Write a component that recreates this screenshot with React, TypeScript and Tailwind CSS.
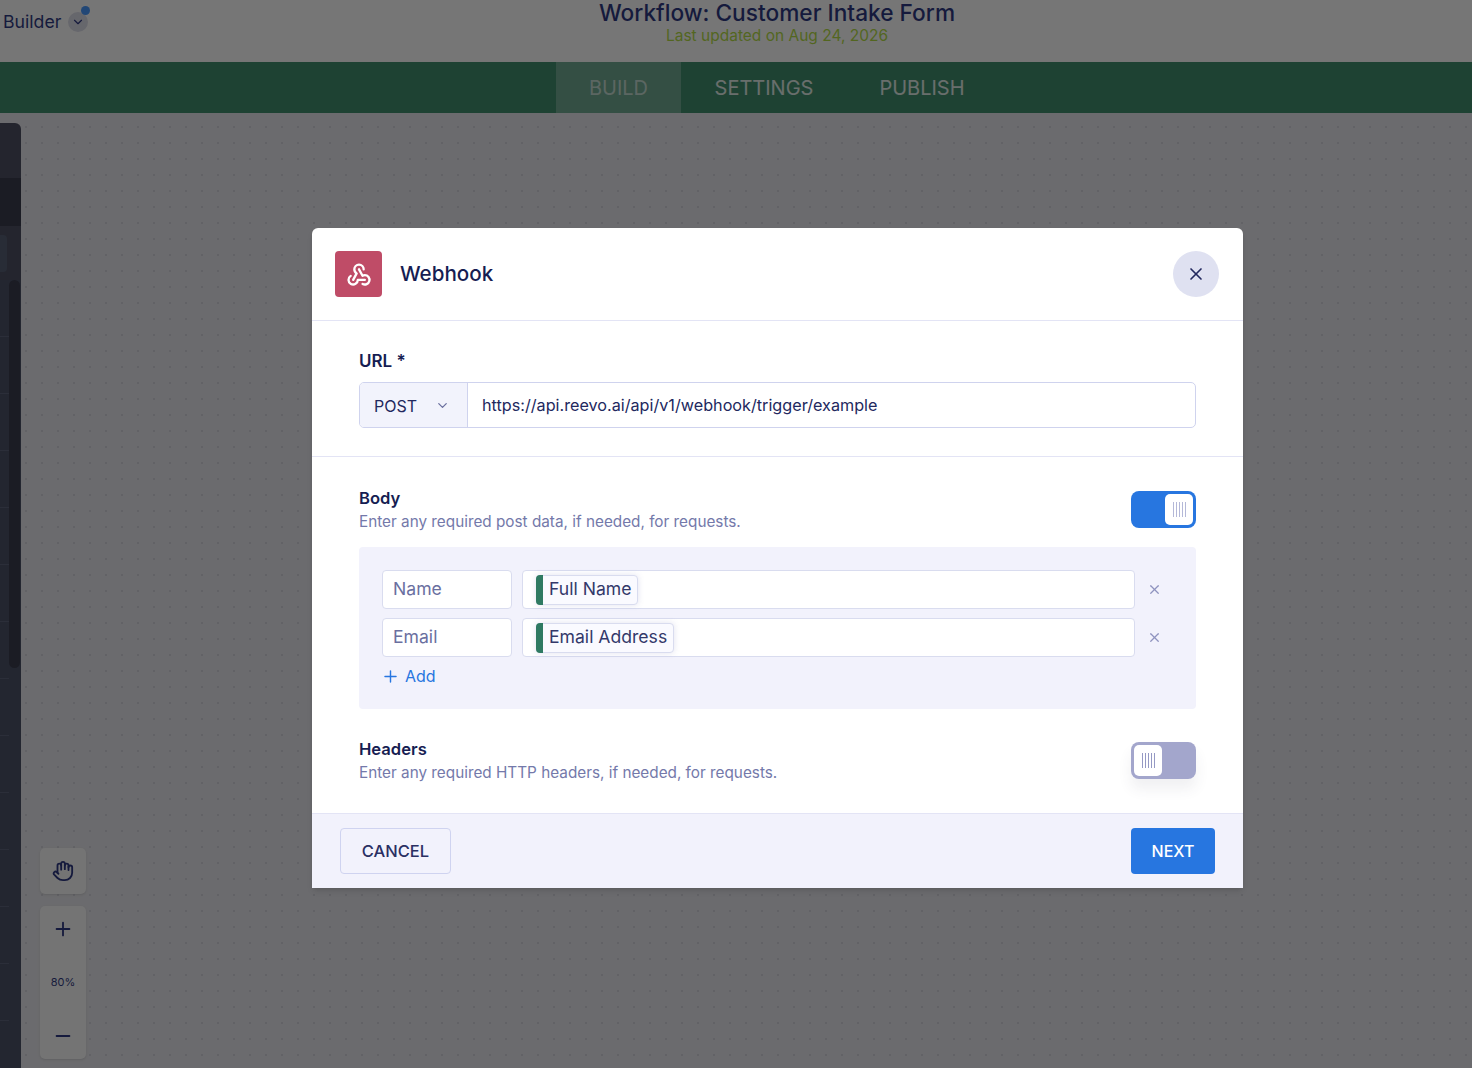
import { ChevronDown, Hand, Minus, Plus, X } from 'lucide-react'
import { TbWebhook } from 'react-icons/tb'

const font = { fontFamily: 'Inter, "Noto Sans", sans-serif' }

const sidebarRows = Array.from({ length: 14 }, (_, i) => i)

// Row of the body table: key input + value chip + remove button
const BodyRow = ({ name, value }: { name: string; value: string }) => (
  <div className="flex items-center">
    <div className="flex h-[39px] w-[130px] items-center rounded-[4px] border border-[#d9dcef] bg-white pl-[10px] text-[17.6px] text-[#6a6f9f]">
      {name}
    </div>
    <div className="ml-[10px] flex h-[39px] w-[613px] items-center rounded-[4px] border border-[#d9dcef] bg-white pl-[13px]">
      <div className="flex h-[30px] items-center rounded-[4px] border border-[#d9dcef] bg-[#fafaff] pr-[6px] shadow-[0_0_6px_rgba(90,95,170,0.18)]">
        <span className="-my-px -ml-px h-[30px] w-[7px] rounded-l-[4px] bg-[#2f7a62]" />
        <span className="ml-[6px] text-[17.6px] text-[#33386a]">{value}</span>
      </div>
    </div>
    <X className="ml-[12px] h-[15px] w-[15px] text-[#8f93bf]" strokeWidth={2} />
  </div>
)

const Grip = ({ color }: { color: string }) => (
  <div className="flex gap-[2px]">
    {[0, 1, 2, 3, 4].map((i) => (
      <span key={i} className={`h-[15px] w-px ${color}`} />
    ))}
  </div>
)

const Section = ({ title, text, on }: { title: string; text: string; on: boolean }) => (
  <div className="flex items-center justify-between">
    <div>
      <div className="text-[16.6px] leading-[22px] font-semibold text-[#161d52]">{title}</div>
      <div className="mt-[2px] text-[15.3px] leading-[22px] text-[#7479aa]">{text}</div>
    </div>
    {on ? (
      <div className="-mt-[2px] flex h-[37px] w-[65px] items-center justify-end rounded-[8px] bg-[#2776e0] pr-[3px]">
        <div className="flex h-[31px] w-[28px] items-center justify-center rounded-[5px] bg-white">
          <Grip color="bg-[#b4b8d8]" />
        </div>
      </div>
    ) : (
      <div className="-mt-[2px] flex h-[37px] w-[65px] items-center rounded-[8px] bg-[#a3a6cc] pl-[3px] shadow-[0_10px_14px_rgba(60,60,90,0.08)]">
        <div className="flex h-[31px] w-[28px] items-center justify-center rounded-[5px] bg-white">
          <Grip color="bg-[#9599c4]" />
        </div>
      </div>
    )}
  </div>
)

export default function App() {
  return (
    <div className="relative h-[1068px] w-[1472px] overflow-hidden bg-white" style={font}>
      {/* Header */}
      <header className="relative flex h-[62px] items-start justify-center bg-white pl-[82px]">
        <div className="absolute top-[10px] left-[3px] flex items-center text-[17.7px] leading-[24px] text-[#0e1a70]">
          Builder
          <span className="relative ml-[7px] flex h-[20px] w-[20px] items-center justify-center rounded-full bg-[#d8d9e6]">
            <ChevronDown className="h-[14px] w-[14px] text-[#0e1a70]" />
            <span className="absolute -top-[6px] -right-[2px] h-[9px] w-[9px] rounded-full bg-[#2f8bff]" />
          </span>
        </div>
        <div className="text-center">
          <div className="text-[22.7px] leading-[26px] font-medium text-[#0e1a70]">Workflow: Customer Intake Form</div>
          <div className="mt-[1px] text-[15.5px] leading-[18px] text-[#a8d82a]">Last updated on Aug 24, 2026</div>
        </div>
      </header>

      {/* Tabs */}
      <nav className="flex h-[51px] justify-center bg-[#247e58] pl-[81px] text-[20px] text-white">
        <div className="flex w-[125px] items-center justify-center bg-white/25 text-white/60">BUILD</div>
        <div className="flex w-[166px] items-center justify-center text-white/85">SETTINGS</div>
        <div className="flex w-[150px] items-center justify-center text-white/85">PUBLISH</div>
      </nav>

      {/* Canvas */}
      <main className="relative h-[955px] bg-[#e4e4ea] bg-[radial-gradient(#cdcdd6_0.8px,transparent_1.1px)] bg-[size:16px_16px] bg-[position:2px_6px]">
        <aside className="absolute top-[10px] bottom-0 left-0 flex w-[21px] flex-col overflow-hidden rounded-tr-[6px] bg-[#33354c]">
          <div className="h-[55px] shrink-0" />
          <div className="h-[48px] shrink-0 bg-[#1c1f33]" />
          <div className="mt-[9px] h-[37px] w-[7px] shrink-0 rounded-r-[4px] bg-[#3d4660]" />
          <div className="mt-[8px] flex flex-1 bg-[#303851]">
            <div className="w-[9px]">
              {sidebarRows.map((row) => (
                <div key={row} className="h-[57px] border-b border-[#454d66]" />
              ))}
            </div>
            <div className="h-[388px] w-[11px] rounded-[6px] bg-[#1c1f33]" />
          </div>
        </aside>

        <div className="absolute top-[735px] left-[40px] flex flex-col gap-[12px]">
          <div className="flex h-[46px] w-[46px] items-center justify-center rounded-[5px] bg-[#fafafa] shadow-sm">
            <Hand className="h-[22px] w-[22px] text-[#0e1a70]" />
          </div>
          <div className="flex h-[153px] w-[46px] flex-col items-center justify-between rounded-[5px] bg-[#fafafa] py-[12px] shadow-sm">
            <Plus className="h-[22px] w-[22px] text-[#0e1a70]" />
            <span className="text-[11px] text-[#0e1a70]">80%</span>
            <Minus className="h-[22px] w-[22px] text-[#0e1a70]" />
          </div>
        </div>
      </main>

      {/* Dim layer */}
      <div className="absolute inset-0 bg-[#1a1a1a]/60" />

      {/* Modal */}
      <div className="absolute top-[228px] left-[312px] w-[931px] overflow-hidden rounded-t-[6px] bg-white shadow-md">
        <div className="flex h-[93px] items-center justify-between border-b border-[#e3e4f5] pr-[24px] pl-[23px]">
          <div className="flex items-center">
            <div className="flex h-[46px] w-[47px] items-center justify-center rounded-[4px] bg-[#bf4c67]">
              <TbWebhook className="h-[28px] w-[28px] text-white" />
            </div>
            <span className="mt-[1px] ml-[18px] text-[20.6px] font-medium text-[#161d52]">Webhook</span>
          </div>
          <div className="flex h-[46px] w-[46px] items-center justify-center rounded-full bg-[#dfe1f1]">
            <X className="h-[20px] w-[20px] text-[#22285e]" />
          </div>
        </div>

        <div className="h-[136px] border-b border-[#e3e4f5] px-[47px] pt-[28px]">
          <div className="text-[17px] leading-[24px] font-semibold text-[#161d52]">URL *</div>
          <div className="mt-[9px] flex h-[46px] overflow-hidden rounded-[5px] border border-[#cfd3ee]">
            <div className="flex w-[108px] items-center border-r border-[#cfd3ee] bg-[#f2f3fc] pt-[1px] pl-[14px] text-[16px] text-[#22285e]">
              POST
              <ChevronDown className="ml-[18px] h-[15px] w-[15px] text-[#6a6f9f]" />
            </div>
            <div className="flex flex-1 items-center pt-[1px] pl-[14px] text-[16.2px] text-[#22285e]">
              https://api.reevo.ai/api/v1/webhook/trigger/example
            </div>
          </div>
        </div>

        <div className="h-[356px] px-[47px] pt-[30px]">
          <Section title="Body" text="Enter any required post data, if needed, for requests." on />
          <div className="mt-[14px] h-[162px] rounded-[4px] bg-[#f2f2fc] pt-[23px] pl-[23px]">
            <div className="flex flex-col gap-[9px]">
              <BodyRow name="Name" value="Full Name" />
              <BodyRow name="Email" value="Email Address" />
            </div>
            <div className="mt-[7px] -ml-[1px] flex items-center text-[16px] leading-[24px] text-[#2776e0]">
              <Plus className="h-[19px] w-[19px]" strokeWidth={1.8} />
              <span className="ml-[5px]">Add</span>
            </div>
          </div>
          <div className="mt-[29px]">
            <Section title="Headers" text="Enter any required HTTP headers, if needed, for requests." on={false} />
          </div>
        </div>

        <div className="flex h-[75px] items-center justify-between border-t border-[#e3e4f5] bg-[#f2f2fc] px-[28px]">
          <div className="flex h-[46px] w-[111px] items-center justify-center rounded-[4px] border border-[#cfd3f0] text-[16.5px] font-medium text-[#2a2f63]">
            CANCEL
          </div>
          <div className="flex h-[46px] w-[84px] items-center justify-center rounded-[4px] bg-[#2776e0] text-[16px] font-medium text-white">
            NEXT
          </div>
        </div>
      </div>
    </div>
  )
}
